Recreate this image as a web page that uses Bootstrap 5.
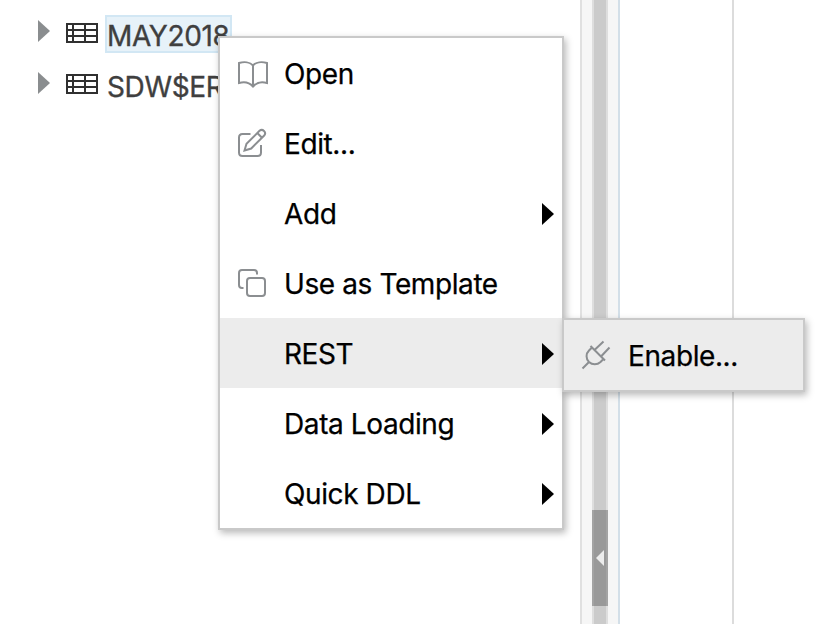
<!DOCTYPE html>
<html lang="en">
<head>
<meta charset="utf-8">
<meta name="viewport" content="width=device-width, initial-scale=1">
<title>Navigator</title>
<link rel="stylesheet" href="https://cdn.jsdelivr.net/npm/bootstrap@5.3.0/dist/css/bootstrap.min.css">
<style>
body{font-family:Inter,"Liberation Sans",sans-serif;font-size:28px;line-height:34px;color:#000;background:#fff}
.tree-pane{width:580px;padding:13px 0 0 38px}
.tree-row{height:51px;color:#3f3f3f}
.tree-row svg{flex:none}
.tree-caret{width:12px;height:22px;margin-top:7px;margin-right:16px;fill:#8a8d8f}
.tree-row + .tree-row .tree-caret{margin-top:8px}
.tree-icon{width:32px;height:20px;margin-top:10px;margin-right:7px}
.tree-label{height:38px;margin-top:2px;border:2px solid transparent;line-height:38px;letter-spacing:-.35px;white-space:nowrap;-webkit-text-stroke:.35px #3f3f3f}
.tree-label.picked{width:127px;background:#e7f2f9;border-color:#d2e7f4}
.splitter{width:40px;background:#f6f6f6;border-left:2px solid #e0e0e0;border-right:2px solid #d3dfe8}
.track{width:16px;background:#cbcbcb;border:solid #dedede;border-width:0 2px;padding-top:510px}
.handle{width:16px;height:96px;margin-left:-2px;background:#999;border:solid #a3a3a3;border-width:0 2px}
.editor-gutter{width:114px;box-sizing:border-box;border-right:2px solid #dcdcdc}
.popup{background:#fff;border:2px solid #c9c9c9;border-radius:0;box-shadow:2px 3px 7px rgba(0,0,0,.28)}
.main-menu{left:218px;top:36px;width:346px}
.sub-menu{left:562px;top:318px;width:243px;background:#ececec}
.entry{height:70px;padding:0 8px 0 16px}
.entry.active-entry{background:#ececec}
.entry-icon{width:32px;height:32px;margin-right:16px;flex:none;fill:none;stroke:#8b8e91;stroke-width:2}
.entry-text{white-space:nowrap;padding-top:1px;letter-spacing:-.4px;-webkit-text-stroke:.25px #000}
.more{width:12px;height:22px;margin-left:auto;margin-top:2px;fill:#000}
</style>
<script src="https://cdn.jsdelivr.net/npm/bootstrap@5.3.0/dist/js/bootstrap.bundle.min.js"></script>
</head>
<body class="vh-100 overflow-hidden position-relative">
<svg class="d-none">
  <symbol id="grid" viewBox="0 0 32 20"><path d="M1 1h30v18H1zM7 1v18M19 1v18M1 7h30M1 13h30" fill="none" stroke="#303030" stroke-width="2"/></symbol>
  <symbol id="caret" viewBox="0 0 12 22"><path d="M0 0L12 11L0 22z"/></symbol>
</svg>
<main class="d-flex h-100">
  <section class="tree-pane flex-shrink-0">
    <div class="tree-row d-flex align-items-start">
      <svg class="tree-caret"><use href="#caret"/></svg><svg class="tree-icon"><use href="#grid"/></svg><span class="tree-label picked">MAY2018</span>
    </div>
    <div class="tree-row d-flex align-items-start">
      <svg class="tree-caret"><use href="#caret"/></svg><svg class="tree-icon"><use href="#grid"/></svg><span class="tree-label">SDW$ER</span>
    </div>
  </section>
  <div class="splitter d-flex justify-content-center flex-shrink-0">
    <div class="track"><div class="handle d-flex align-items-center justify-content-center"><svg width="8" height="16"><path d="M8 0V16L0 8z" fill="#ececec"/></svg></div></div>
  </div>
  <section class="editor-gutter flex-shrink-0"></section>
</main>

<nav class="popup main-menu position-absolute">
  <div class="entry d-flex align-items-center">
    <svg class="entry-icon" viewBox="0 0 32 32"><path d="M17 8.500C14 5 8 4.500 3 6V26C8 24.500 13 25 17 29.500C21 25 26 24.500 31 26V6C26 4.500 20 5 17 8.500zM17 8.500V29"/></svg>
    <span class="entry-text">Open</span>
  </div>
  <div class="entry d-flex align-items-center">
    <svg class="entry-icon" viewBox="0 0 32 32"><path d="M14.500 7H6.500Q3 7 3 10.500V25.500Q3 29 6.500 29H21.500Q25 29 25 25.500V18M8.500 23.500L10.500 16.800L23.500 3.800Q25.800 1.800 28 4Q30.200 6.200 28.200 8.500L15.200 21.500zM21.300 6L26 10.700"/></svg>
    <span class="entry-text">Edit...</span>
  </div>
  <div class="entry d-flex align-items-center">
    <span class="entry-icon"></span><span class="entry-text">Add</span><svg class="more"><use href="#caret"/></svg>
  </div>
  <div class="entry d-flex align-items-center">
    <svg class="entry-icon" viewBox="0 0 32 32"><path d="M7.500 21H6Q3 21 3 18V6Q3 3 6 3H18Q21 3 21 6V7.500"/><rect x="11" y="11" width="18" height="18" rx="3"/></svg>
    <span class="entry-text">Use as Template</span>
  </div>
  <div class="entry active-entry d-flex align-items-center">
    <span class="entry-icon"></span><span class="entry-text">REST</span><svg class="more"><use href="#caret"/></svg>
  </div>
  <div class="entry d-flex align-items-center">
    <span class="entry-icon"></span><span class="entry-text">Data Loading</span><svg class="more"><use href="#caret"/></svg>
  </div>
  <div class="entry d-flex align-items-center">
    <span class="entry-icon"></span><span class="entry-text">Quick DDL</span><svg class="more"><use href="#caret"/></svg>
  </div>
</nav>

<nav class="popup sub-menu position-absolute">
  <div class="entry d-flex align-items-center">
    <svg class="entry-icon" viewBox="0 0 32 32"><path d="M2.500 29.500L9 23M10.500 7L25 21.500M12 8.500L9 11.500A8 8 0 0 0 9 23A8.500 8.500 0 0 0 20.500 23L23.500 20M14.500 11L23.500 2.500M21 17.500L29.500 8.500"/></svg>
    <span class="entry-text">Enable...</span>
  </div>
</nav>
</body>
</html>
